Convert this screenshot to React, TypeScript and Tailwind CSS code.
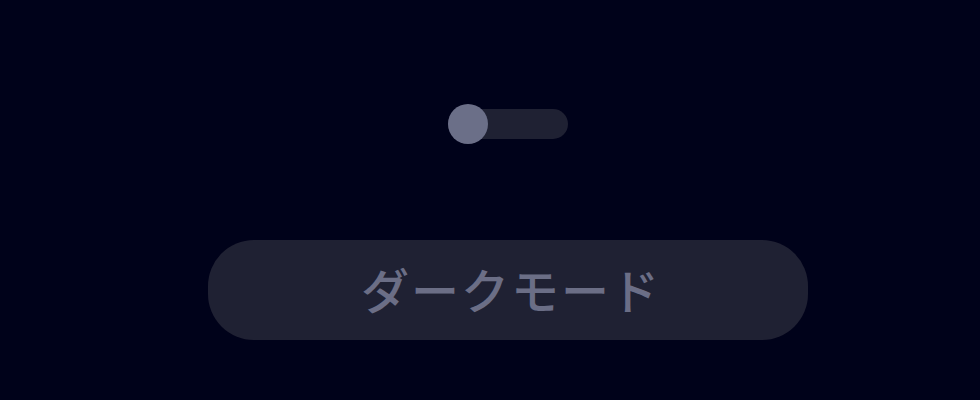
import { useState } from 'react';

export default function App() {
  const [dark, setDark] = useState(false);

  return (
    <div
      className="min-h-[400px] w-full bg-[#00021a] flex justify-center pl-[36px]"
      style={{ fontFamily: '"Noto Sans CJK JP", "Noto Sans", sans-serif' }}
    >
      <div className="flex flex-col items-center pt-[104px] gap-[96px]">
        <button
          type="button"
          onClick={() => setDark(!dark)}
          className="relative w-[120px] h-[40px] flex items-center"
        >
          <span className="block w-full h-[30px] rounded-full bg-[#1f2133]" />
          <span className="absolute left-0 top-0 w-[40px] h-[40px] rounded-full bg-[#6b6f88]" />
        </button>
        <button
          type="button"
          className="w-[600px] h-[100px] rounded-[46px] bg-[#1f2133] text-[#6b6e86] text-[48px] font-medium tracking-[2px] pb-[4px] pl-[6px] flex items-center justify-center"
        >
          ダークモード
        </button>
      </div>
    </div>
  );
}
